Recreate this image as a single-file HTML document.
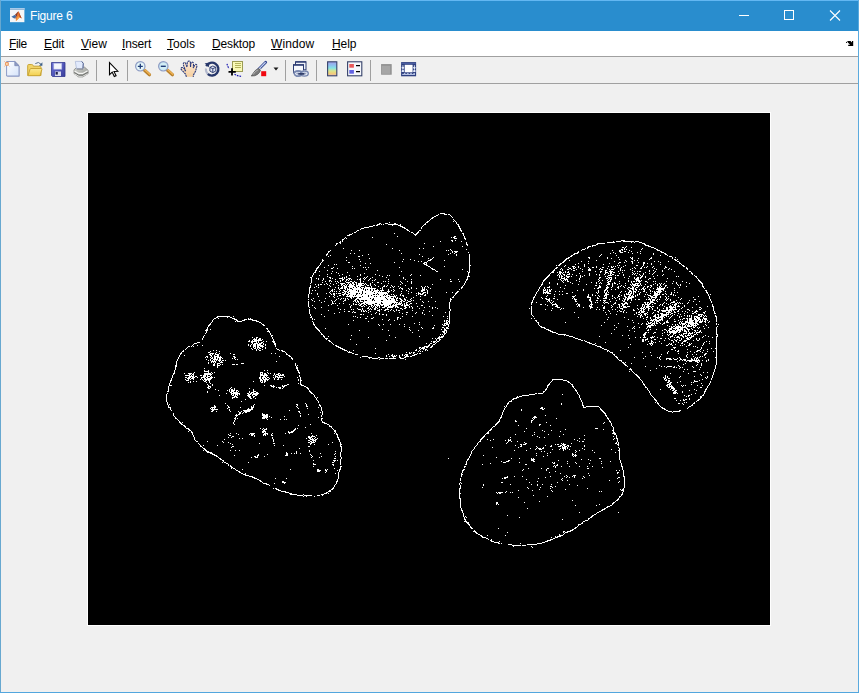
<!DOCTYPE html>
<html><head><meta charset="utf-8"><title>Figure 6</title>
<style>
html,body{margin:0;padding:0;background:#f0f0f0;overflow:hidden}
body{width:859px;height:693px;position:relative;font-family:"Liberation Sans",sans-serif;font-size:12px;color:#000}
#win{position:absolute;left:0;top:0;width:859px;height:693px;background:#f0f0f0;overflow:hidden}
#title{position:absolute;left:0;top:0;width:859px;height:31px;background:#298dce;border-top:1px solid #63b7f2;box-sizing:border-box}
#title .cap{position:absolute;left:30px;top:8px;color:#fff;font-size:12px;line-height:15px;white-space:nowrap;letter-spacing:-0.2px}
#menu{position:absolute;left:1px;top:31px;width:857px;height:25px;background:#fff}
#menu span{position:absolute;top:6px;line-height:15px;white-space:nowrap}
#menu span u{text-decoration:underline;text-underline-offset:1px}
#tbline1{position:absolute;left:1px;top:56px;width:857px;height:1px;background:#a0a0a0}
#tool{position:absolute;left:1px;top:57px;width:857px;height:26px;background:#f0f0f0}
#tbline2{position:absolute;left:1px;top:83px;width:857px;height:1px;background:#a0a0a0}
.sep{position:absolute;top:60px;width:1px;height:21px;background:#a0a0a0}
#bl{position:absolute;left:0;top:0;width:1px;height:693px;background:#67a8d0}
#br{position:absolute;left:858px;top:0;width:1px;height:693px;background:#5aaade}
#bb{position:absolute;left:0;top:692px;width:859px;height:1px;background:#52a6de}
#axes{position:absolute;left:87px;top:112px;width:684px;height:514px;background:#fff}
#axes svg{position:absolute;left:1px;top:1px}
svg.ic{position:absolute;overflow:visible}
</style></head><body><div id="win">
<div id="title"><span class="cap">Figure 6</span>
<svg class="ic" style="left:9.800px;top:6.800px" width="14.400" height="14.200" viewBox="0 0 14.400 14.200"><rect x="0" y="0" width="14.400" height="14.200" fill="#f5f6f7"/><rect x="0" y="0" width="14.400" height="1.700" fill="#a9cbea"/><rect x="0" y="1.500" width="14.400" height=".5" fill="#6f9cc4"/><path d="M1.400 8.700L5 6.700 6.600 8.600 4.300 10.400z" fill="#3f6ea8"/><path d="M5 6.700C6.500 5.500 7.500 3.800 8.300 3.200L7.700 7 6.300 10.200 4.300 10.400 6.600 8.600z" fill="#8c3a22"/><path d="M8.300 3.200C9.300 4.200 10.500 8.500 12.200 10.800 11 10 10 9.300 9.200 9.800 8.300 10.600 7.300 12.200 5.900 12.800 5.600 11.800 6.200 9.500 7.300 7.200z" fill="#e76f28"/><path d="M8.300 3.200C9.300 4.200 10.500 8.500 12.200 10.800 11.200 10.100 10.500 9.600 9.900 9.600 9.700 7.500 9.200 5 8.300 3.200z" fill="#a8401e"/><path d="M5.900 12.800C7.300 12.200 8.300 10.600 9.200 9.800L8.300 7.500 7 9.800z" fill="#f5a343"/></svg>
<svg class="ic" style="left:735px;top:9px" width="110" height="12" viewBox="0 0 110 12" fill="none" stroke="#fff" stroke-width="1"><path d="M4 5.5h10"/><rect x="49.5" y="0.5" width="9" height="9"/><path d="M95 0.5l10 10M105 0.5l-10 10" stroke-width="1.1"/></svg>
</div>
<div id="menu">
<span style="left:8px;letter-spacing:-0.35px"><u>F</u>ile</span>
<span style="left:43px;letter-spacing:-0.1px"><u>E</u>dit</span>
<span style="left:80px"><u>V</u>iew</span>
<span style="left:121px;letter-spacing:-0.15px"><u>I</u>nsert</span>
<span style="left:166px"><u>T</u>ools</span>
<span style="left:211px;letter-spacing:-0.15px"><u>D</u>esktop</span>
<span style="left:270px;letter-spacing:0.1px"><u>W</u>indow</span>
<span style="left:331px;letter-spacing:-0.1px"><u>H</u>elp</span>
<svg class="ic" style="left:844px;top:9px" width="9" height="7" viewBox="0 0 9 7"><path d="M2.200 1h3.300l1.500 1.400v-1.400h1.200v5h-5v-1.200h2l-1.600-1.600-.8-.6z" fill="#000"/><rect x="1" y="1.900" width="1" height="1" fill="#000"/></svg>
</div>
<div id="tbline1"></div><div id="tool"></div><div id="tbline2"></div>
<div class="sep" style="left:96px"></div><div class="sep" style="left:127px"></div><div class="sep" style="left:285px"></div><div class="sep" style="left:316px"></div><div class="sep" style="left:370px"></div>
<svg class="ic" style="left:4px;top:61px" width="17" height="17" viewBox="0 0 17 17"><defs><linearGradient id="gd" x1="0" y1="0" x2="1" y2="1"><stop offset="0" stop-color="#fff"/><stop offset="1" stop-color="#d5e3fa"/></linearGradient></defs><path d="M3.300 1.300h8.200l4.200 4.200v10.300h-12.400z" fill="#6f7fb4" opacity=".6"/><path d="M2.600 0.500h8.200l4.200 4.200v10.300h-12.400z" fill="url(#gd)" stroke="#8b9ac6" stroke-width="1"/><path d="M10.800 0.500v4.200h4.200z" fill="#8f9cc4" stroke="#7c8ab5" stroke-width=".8"/><circle cx="2.900" cy="2.900" r="2.100" fill="#ec9a62"/><circle cx="2.900" cy="2.900" r="1" fill="#ffe2b8"/><path d="M0.400 0.400l.9 .9M5.400 0.400l-.9 .9M0.400 5.400l.9-.9M5.400 5.400l-.9-.9" stroke="#e8905a" stroke-width=".7"/></svg>
<svg class="ic" style="left:27px;top:61px" width="16" height="16" viewBox="0 0 16 16"><defs><linearGradient id="gf" x1="0" y1="0" x2="0" y2="1"><stop offset="0" stop-color="#fbe991"/><stop offset="1" stop-color="#f3cf4d"/></linearGradient></defs><path d="M0.7 14.5v-10q0-1 1-1h3q1 0 1.3 .8l.4 .9h6.600q1 0 1 1v8.300z" fill="#f1d367" stroke="#c9a537" stroke-width="1"/><path d="M1 14.700l2-6.500q.2-.7 1-.7h10.300q.9 0 .6 .9l-1.900 6.300z" fill="url(#gf)" stroke="#c9a537" stroke-width="1"/><path d="M8.300 2.600q3.200-2.600 6 .8" fill="none" stroke="#58718f" stroke-width="1"/><path d="M15.400 1.300v3.400h-3.400z" fill="#3d5f86"/></svg>
<svg class="ic" style="left:50px;top:61px" width="16" height="16" viewBox="0 0 16 16"><defs><linearGradient id="gs" x1="0" y1="0" x2="1" y2="1"><stop offset="0" stop-color="#6a70d8"/><stop offset="1" stop-color="#3b3f9c"/></linearGradient></defs><path d="M1.500 1.500h13.500v14h-12.500l-1-1z" fill="url(#gs)" stroke="#34388e" stroke-width=".8"/><rect x="3.800" y="2.200" width="8" height="6" fill="#f3f5fc" stroke="#a9b0e2" stroke-width=".6"/><rect x="5" y="10.500" width="6" height="4.500" fill="#d9dcf0"/><rect x="5.600" y="11" width="2.200" height="2.600" fill="#1d1f4a"/></svg>
<svg class="ic" style="left:73px;top:61px" width="16" height="16" viewBox="0 0 16 16"><defs><linearGradient id="gp" x1="0" y1="0" x2="1" y2="1"><stop offset="0" stop-color="#d6d8d4"/><stop offset="1" stop-color="#8e908c"/></linearGradient></defs><path d="M1 8.800l3-2.600h7.600l3.500 3.100v3.300l-5.300 3.300h-4.200l-4.600-3.300z" fill="url(#gp)" stroke="#858783" stroke-width=".8"/><path d="M1.500 9.900l4.400 2.500h3.800l4.900-2.700" fill="none" stroke="#f6f6f4" stroke-width="1.100"/><path d="M1.400 11.600l4.500 2.700h3.800l5-2.800" fill="none" stroke="#5f615d" stroke-width=".9"/><path d="M1.500 12.900l4.400 2.400h3.700l4.900-2.600" fill="none" stroke="#eeeeec" stroke-width=".8"/><path d="M2.300 0.400h6.400l1.600 2-.4 5.400h-6.400z" fill="#e2eafc" stroke="#a6b4d6" stroke-width=".7"/><path d="M8.700 0.400l1.600 2-.4 5" fill="none" stroke="#52618e" stroke-width="1"/><path d="M3.800 8h6.200" stroke="#6a6c78" stroke-width=".8"/></svg>
<svg class="ic" style="left:104px;top:61px" width="16" height="16" viewBox="0 0 16 16"><path d="M5.500 1.700v12l2.700-2.600 2.100 4.500 1.800-.8-2.100-4.400 3.800-.2z" fill="#fff" stroke="#000" stroke-width="1.100" stroke-linejoin="miter"/></svg>
<svg class="ic" style="left:134px;top:61px" width="17" height="16" viewBox="0 0 17 16"><path d="M10.500 9.300l5 4.400" stroke="#b9812c" stroke-width="3.200" stroke-linecap="round"/><path d="M10.800 8.800l5 4.400" stroke="#efb355" stroke-width="1.500" stroke-linecap="round"/><circle cx="6.300" cy="5.300" r="4.700" fill="#d8f0f6" stroke="#8f9cc4" stroke-width="1.200"/><circle cx="6.300" cy="5.300" r="3.400" fill="#e9f8fb"/><path d="M3.800 5.300h5M6.300 2.800v5" stroke="#1f3c78" stroke-width="1.300"/></svg>
<svg class="ic" style="left:157px;top:61px" width="17" height="16" viewBox="0 0 17 16"><path d="M10.500 9.300l5 4.400" stroke="#b9812c" stroke-width="3.200" stroke-linecap="round"/><path d="M10.800 8.800l5 4.400" stroke="#efb355" stroke-width="1.500" stroke-linecap="round"/><circle cx="6.300" cy="5.300" r="4.700" fill="#c6e6f0" stroke="#8f9cc4" stroke-width="1.200"/><circle cx="6.300" cy="5.300" r="3.400" fill="#d4eff6"/><path d="M3.800 5.300h5" stroke="#1f3c78" stroke-width="1.400"/></svg>
<svg class="ic" style="left:180px;top:60px" width="18" height="17" viewBox="0 0 18 17"><defs><linearGradient id="gh" x1="0" y1="0" x2="0" y2="1"><stop offset="0" stop-color="#fdeada"/><stop offset="1" stop-color="#f6cf9e"/></linearGradient></defs><path d="M6.400 16.800L5.500 14 1.200 9.500Q.6 8.300 1.800 7.500 2.800 7.200 3.800 8.300L5 9.500 3.300 4.500Q3.100 2.800 4.300 2.500 5.300 2.400 5.800 3.800L7 7.200 7.300 2.500Q7.600 1 9 1 10.300 1.100 10.400 2.600L10.500 7 11 3.300Q11.500 1.900 12.600 2.200 13.600 2.600 13.500 4L13.300 8 14.600 5.200Q15.400 4 16.300 4.500 17.200 5.200 16.800 6.600L15.600 11 13.500 15 13.200 16.800z" fill="url(#gh)" stroke="none"/><path d="M6.400 16.800L5.500 14 1.200 9.500Q.6 8.300 1.800 7.500 2.800 7.200 3.800 8.300L5 9.500 3.300 4.500Q3.100 2.800 4.300 2.500 5.300 2.400 5.800 3.800L7 7.200 7.300 2.500Q7.600 1 9 1 10.300 1.100 10.400 2.600L10.500 7 11 3.300Q11.500 1.900 12.600 2.200 13.600 2.600 13.500 4L13.300 8 14.600 5.200Q15.400 4 16.300 4.500 17.200 5.200 16.800 6.600L15.600 11 13.500 15 13.200 16.800" fill="none" stroke="#2b3a7c" stroke-width="1.100" stroke-dasharray="2 .6"/><path d="M4.800 9.500l.8 1.800" stroke="#2b3a7c" stroke-width="1.300"/></svg>
<svg class="ic" style="left:203px;top:60px" width="18" height="18" viewBox="0 0 18 18"><path d="M4.600 13.800a6.400 6.400 0 1 0 -1.300-7.600" fill="none" stroke="#26366a" stroke-width="2.300"/><path d="M4.800 14a6.400 6.400 0 0 1 -1.800-5.500" fill="none" stroke="#b4bace" stroke-width="2.100"/><path d="M1.600 3.400l4.600-1-.2 4.900z" fill="#26366a"/><path d="M6.900 7.400l2.900-1.400 3 1.300v3.700l-3 1.600-2.900-1.500z" fill="#dfe4f6" stroke="#26366a" stroke-width=".9"/><path d="M6.900 7.400l2.900 1.300 3-1.400M9.800 8.700v3.900" fill="none" stroke="#26366a" stroke-width=".9"/></svg>
<svg class="ic" style="left:226px;top:61px" width="17" height="16" viewBox="0 0 17 16"><rect x="6.500" y="0.500" width="10" height="10" fill="#f9f9b6" stroke="#9b9b55" stroke-width="1"/><path d="M8.500 2.500h6M8.500 4.500h6M8.500 6.500h6" stroke="#b4b45c" stroke-width="1" shape-rendering="crispEdges"/><path d="M1 2.800l.6 2.200 1.400 2.600M8.500 13.300l3 1.400 4.500 .8" fill="none" stroke="#1a1ab0" stroke-width="1.200" stroke-dasharray="1.700 .9"/><path d="M2.500 10.800h7.300M6 7.300v7.300" stroke="#000" stroke-width="1.800"/></svg>
<svg class="ic" style="left:250px;top:61px" width="17" height="16" viewBox="0 0 17 16"><path d="M15.700 1.300l-7.700 7.800" stroke="#31458f" stroke-width="2.800" stroke-linecap="round"/><path d="M15.300 1.500l-6.800 6.900" stroke="#c7d3f2" stroke-width="1.100" stroke-linecap="round"/><path d="M9.200 7.200l1.500 1.500" stroke="#f2f2f2" stroke-width="1.200"/><path d="M8.800 7.600q-3.800 1-6 5.200-1.300 2-1.600 2.200 4 .3 6.500-1.700 2.500-2 2.700-4.300z" fill="#7b7b7b" stroke="#4a4a4a" stroke-width=".7"/><path d="M3 13.600q2.200-3.600 5.200-4.900" stroke="#b5b5b5" stroke-width="1" fill="none"/><rect x="11.200" y="10.200" width="5" height="5" fill="#f00810"/></svg>
<svg class="ic" style="left:273px;top:67px" width="6" height="4" viewBox="0 0 6 4"><path d="M0.500 0.500h5l-2.500 3z" fill="#1a1a1a"/></svg>
<svg class="ic" style="left:292px;top:61px" width="18" height="16" viewBox="0 0 18 16"><rect x="3.500" y="0.800" width="10.500" height="8" fill="#eef1f8" stroke="#2b3b72" stroke-width="1"/><rect x="3.500" y="0.300" width="10.500" height="1.300" fill="#2b3b72"/><rect x="1.500" y="3.800" width="10" height="8" fill="#f6f8fc" stroke="#2b3b72" stroke-width="1"/><rect x="1" y="3.300" width="11" height="1.400" fill="#2b3b72"/><rect x="1.800" y="9.500" width="11" height="3" fill="#eef1f8"/><ellipse cx="6.200" cy="12.600" rx="3.900" ry="2.600" fill="#e3e8f4" stroke="#7686ae" stroke-width="1.300"/><ellipse cx="12.400" cy="12.600" rx="3.900" ry="2.600" fill="#e3e8f4" stroke="#7686ae" stroke-width="1.300"/><ellipse cx="6.200" cy="12.600" rx="3.900" ry="2.600" fill="none" stroke="#7686ae" stroke-width="1.300"/><ellipse cx="6.200" cy="12.600" rx="2" ry="1" fill="#9aa6c4"/><ellipse cx="12.400" cy="12.600" rx="2" ry="1" fill="#9aa6c4"/><path d="M6.300 12.900h6" stroke="#1e2c5a" stroke-width="1.500"/></svg>
<svg class="ic" style="left:327px;top:61px" width="11" height="16" viewBox="0 0 11 16"><defs><linearGradient id="gc" x1="0" y1="0" x2="0" y2="1"><stop offset="0" stop-color="#a29ee8"/><stop offset=".25" stop-color="#8fc0f0"/><stop offset=".45" stop-color="#86e4e4"/><stop offset=".65" stop-color="#d8e690"/><stop offset=".82" stop-color="#f2d078"/><stop offset="1" stop-color="#e8b8b0"/></linearGradient></defs><rect x="0.600" y="0.800" width="9.200" height="14" fill="url(#gc)" stroke="#36426a" stroke-width="1.100"/></svg>
<svg class="ic" style="left:347px;top:61px" width="16" height="16" viewBox="0 0 16 16"><rect x="0.600" y="0.800" width="14.200" height="14" fill="#f6f8fc" stroke="#36426a" stroke-width="1.100"/><rect x="2.300" y="3" width="4.600" height="3.700" fill="#e85a5a"/><rect x="2.300" y="9" width="4.600" height="3.700" fill="#6262e2"/><path d="M9 4.600h4M9 10.700h4" stroke="#000" stroke-width="1.200"/></svg>
<svg class="ic" style="left:381px;top:64px" width="11" height="11" viewBox="0 0 11 11"><rect x="0.100" y="0.100" width="10.600" height="10.600" fill="#8e8e8e"/><rect x="0.700" y="1.700" width="8.600" height="8.200" fill="#a6a6a6"/><rect x="0.700" y="0.300" width="9" height="1.200" fill="#989898"/></svg>
<svg class="ic" style="left:401px;top:62px" width="16" height="15" viewBox="0 0 16 15"><rect x="0.100" y="0.100" width="15" height="14.200" fill="#2e4080"/><rect x="3.700" y="2.800" width="7.900" height="7.500" fill="#fff"/><path d="M1.100 3.200q1.400 .8 0 1.700t0 1.700 0 1.700 0 1.700h1.600q1.200-.9 0-1.700t0-1.700 0-1.700 0-1.700z" fill="#e6ecfa"/><path d="M12.600 3.200q1.400 .8 0 1.700t0 1.700 0 1.700 0 1.700h1.600q1.200-.9 0-1.700t0-1.700 0-1.700 0-1.700z" fill="#e6ecfa"/><path d="M1.200 11.400q.8 1.400 1.600 0t1.600 0 1.600 0 1.600 0 1.600 0 1.600 0 1.600 0 1.600 0v1.500h-12.800z" fill="#b4c0e2"/><path d="M0.500 1.400h14.200" stroke="#5c70b4" stroke-width=".7"/></svg>

<div id="bl"></div><div id="br"></div><div id="bb"></div>
<div id="axes"><svg width="682" height="512" viewBox="0 0 682 512" shape-rendering="crispEdges"><rect width="682" height="512" fill="#000"/>
<path d="M352 100h5M350 101h1M356 101h3M360 101h2M348 102h2M362 102h1M346 103h2M363 103h1M344 104h2M364 104h1M343 105h2M342 106h1M365 106h1M341 107h1M366 107h1M339 108h2M365 108h1M367 108h1M301 109h1M338 109h2M368 109h1M291 110h2M297 110h3M306 110h2M337 110h1M368 110h1M289 111h3M293 111h1M295 111h1M300 111h10M312 111h1M336 111h2M369 111h2M285 112h2M288 112h2M304 112h1M310 112h3M335 112h1M370 112h1M281 113h4M312 113h3M334 113h1M370 113h2M276 114h5M314 114h3M333 114h1M371 114h1M273 115h3M316 115h2M333 115h1M371 115h2M272 116h1M318 116h2M372 116h1M269 117h2M319 117h2M331 117h2M372 117h2M268 118h1M321 118h1M330 118h1M373 118h1M266 119h2M323 119h2M329 119h2M264 120h1M306 120h1M325 120h1M328 120h2M374 120h2M261 121h3M326 121h3M375 121h1M259 122h3M327 122h1M375 122h1M309 123h1M366 123h2M376 123h1M257 124h1M284 124h1M363 124h1M365 124h2M376 124h1M256 125h1M258 125h1M366 125h3M376 125h2M254 126h2M377 126h1M254 127h1M363 127h2M367 127h1M533 127h4M252 128h1M254 128h1M352 128h1M364 128h1M373 128h1M525 128h1M528 128h5M535 128h11M547 128h4M251 129h2M378 129h1M519 129h8M543 129h1M546 129h1M551 129h3M248 130h2M252 130h1M336 130h1M378 130h1M509 130h8M554 130h3M248 131h1M298 131h1M378 131h2M508 131h2M556 131h2M247 132h1M379 132h1M504 132h4M557 132h4M345 133h1M374 133h1M500 133h3M504 133h1M538 133h1M560 133h3M499 134h2M534 134h2M537 134h1M543 134h1M563 134h3M255 135h1M304 135h1M331 135h1M335 135h1M497 135h1M499 135h1M536 135h1M554 135h1M566 135h2M362 136h1M378 136h1M494 136h3M533 136h2M536 136h1M538 136h1M553 136h1M568 136h2M242 137h1M263 137h1M271 137h1M311 137h1M358 137h1M360 137h1M363 137h1M493 137h1M524 137h1M531 137h2M534 137h1M541 137h1M569 137h3M240 138h2M364 138h1M366 138h4M490 138h1M531 138h2M536 138h2M543 138h1M552 138h1M572 138h2M240 139h1M364 139h1M367 139h2M380 139h1M489 139h2M525 139h1M532 139h3M540 139h1M549 139h1M573 139h3M239 140h1M262 140h1M266 140h1M313 140h1M362 140h1M366 140h1M486 140h4M522 140h1M527 140h1M544 140h1M552 140h1M565 140h1M576 140h2M238 141h2M280 141h1M331 141h1M360 141h1M368 141h1M381 141h1M485 141h2M513 141h1M565 141h1M577 141h2M238 142h1M242 142h1M274 142h1M368 142h1M381 142h1M483 142h2M512 142h1M528 142h1M572 142h1M579 142h1M240 143h1M270 143h2M334 143h1M381 143h1M482 143h2M511 143h1M581 143h3M258 144h1M345 144h1M381 144h1M480 144h2M500 144h2M519 144h1M530 144h1M542 144h1M544 144h1M563 144h1M584 144h1M587 144h1M281 145h1M340 145h1M344 145h1M381 145h1M478 145h3M501 145h1M519 145h1M523 145h1M543 145h2M550 145h1M562 145h2M584 145h1M234 146h1M271 146h1M315 146h1M322 146h1M342 146h2M381 146h1M477 146h2M531 146h1M544 146h1M561 146h1M586 146h2M589 146h1M234 147h2M258 147h1M326 147h1M340 147h3M356 147h1M381 147h1M476 147h2M481 147h1M508 147h1M537 147h1M546 147h1M549 147h1M587 147h2M234 148h1M272 148h1M314 148h1M330 148h1M333 148h1M339 148h1M381 148h1M475 148h2M493 148h1M500 148h1M526 148h1M538 148h1M543 148h2M566 148h1M570 148h1M580 148h1M589 148h2M233 149h1M260 149h2M306 149h1M336 149h3M381 149h1M474 149h2M531 149h2M536 149h1M544 149h1M550 149h1M555 149h2M572 149h1M591 149h1M232 150h1M277 150h1M282 150h1M335 150h2M338 150h1M381 150h1M472 150h2M490 150h1M500 150h1M521 150h1M530 150h1M544 150h1M555 150h2M559 150h1M563 150h1M591 150h2M232 151h1M246 151h1M248 151h1M336 151h3M381 151h1M471 151h2M487 151h1M496 151h1M515 151h1M555 151h1M563 151h1M572 151h1M593 151h1M231 152h1M240 152h1M272 152h1M338 152h2M381 152h2M468 152h1M470 152h2M477 152h1M496 152h1M529 152h1M531 152h1M537 152h1M548 152h2M555 152h1M594 152h2M230 153h1M264 153h1M340 153h2M356 153h1M381 153h1M476 153h1M484 153h3M490 153h1M496 153h1M508 153h1M520 153h1M523 153h1M525 153h1M527 153h1M535 153h1M554 153h1M559 153h1M565 153h1M577 153h1M595 153h2M229 154h2M236 154h1M245 154h1M275 154h1M277 154h1M280 154h1M311 154h1M342 154h1M381 154h1M468 154h2M480 154h1M485 154h1M487 154h1M490 154h1M500 154h1M504 154h2M508 154h1M514 154h2M523 154h2M530 154h1M533 154h1M546 154h1M553 154h1M556 154h1M558 154h1M564 154h1M577 154h2M598 154h1M228 155h2M243 155h2M249 155h1M264 155h1M266 155h1M343 155h2M381 155h1M467 155h2M473 155h1M481 155h2M485 155h2M492 155h1M501 155h1M512 155h1M519 155h1M526 155h1M532 155h1M544 155h1M547 155h1M552 155h2M566 155h1M576 155h1M581 155h1M598 155h2M228 156h1M278 156h1M344 156h3M374 156h1M381 156h1M466 156h1M472 156h1M474 156h1M479 156h2M483 156h1M488 156h1M494 156h1M500 156h3M511 156h1M513 156h2M521 156h1M523 156h3M532 156h1M542 156h1M568 156h1M580 156h1M583 156h1M599 156h1M227 157h2M239 157h1M289 157h1M347 157h1M381 157h1M465 157h2M474 157h1M485 157h2M500 157h3M517 157h2M522 157h1M532 157h1M534 157h1M536 157h1M544 157h1M561 157h1M565 157h1M574 157h1M227 158h1M231 158h1M244 158h1M313 158h1M348 158h2M379 158h1M381 158h1M464 158h2M471 158h2M477 158h1M480 158h1M494 158h1M507 158h1M512 158h2M517 158h1M521 158h4M530 158h1M546 158h1M549 158h1M551 158h2M561 158h1M567 158h1M574 158h1M586 158h1M601 158h2M226 159h2M248 159h1M259 159h1M380 159h2M463 159h3M469 159h1M471 159h3M475 159h1M477 159h1M479 159h2M512 159h1M517 159h3M522 159h2M525 159h2M534 159h1M544 159h1M557 159h1M566 159h1M603 159h1M225 160h1M243 160h1M250 160h1M276 160h1M380 160h1M462 160h1M471 160h2M474 160h1M481 160h1M491 160h1M501 160h1M517 160h1M520 160h1M522 160h2M531 160h1M545 160h1M547 160h1M549 160h1M555 160h1M561 160h1M565 160h1M603 160h2M225 161h1M239 161h1M254 161h1M272 161h1M287 161h1M323 161h1M380 161h1M461 161h1M470 161h1M472 161h1M475 161h2M479 161h3M484 161h1M501 161h1M508 161h1M511 161h1M516 161h1M522 161h1M524 161h2M535 161h1M544 161h1M546 161h1M551 161h1M555 161h1M564 161h1M575 161h1M604 161h1M224 162h1M231 162h1M251 162h1M261 162h1M272 162h1M291 162h1M299 162h1M301 162h1M311 162h1M322 162h1M332 162h1M380 162h1M460 162h2M469 162h1M471 162h1M473 162h1M476 162h1M478 162h1M488 162h1M492 162h1M496 162h1M501 162h1M511 162h1M520 162h4M527 162h1M529 162h2M535 162h1M548 162h1M552 162h1M554 162h1M569 162h1M574 162h1M606 162h1M224 163h1M239 163h1M258 163h1M269 163h1M279 163h1M294 163h1M379 163h3M459 163h2M471 163h1M473 163h2M478 163h4M483 163h1M492 163h1M494 163h1M517 163h1M519 163h1M541 163h1M553 163h2M557 163h1M565 163h1M588 163h1M590 163h1M607 163h2M222 164h2M241 164h2M254 164h1M256 164h1M258 164h1M276 164h1M278 164h1M284 164h1M298 164h1M315 164h1M379 164h1M458 164h2M471 164h1M473 164h1M476 164h1M479 164h2M492 164h1M511 164h2M520 164h4M527 164h1M536 164h1M546 164h1M549 164h2M552 164h2M557 164h1M608 164h1M223 165h1M228 165h1M230 165h1M235 165h1M242 165h1M244 165h1M251 165h4M256 165h1M260 165h3M272 165h1M275 165h1M277 165h1M282 165h1M315 165h1M379 165h1M457 165h2M473 165h4M478 165h1M491 165h1M511 165h1M518 165h2M521 165h1M523 165h1M527 165h1M540 165h1M546 165h1M548 165h3M552 165h1M561 165h2M566 165h1M579 165h1M609 165h1M223 166h1M230 166h1M235 166h1M247 166h1M254 166h2M258 166h2M261 166h1M263 166h1M269 166h1M271 166h2M276 166h1M281 166h1M287 166h1M300 166h1M317 166h1M323 166h1M352 166h1M362 166h1M370 166h1M378 166h2M456 166h2M470 166h1M472 166h1M476 166h4M491 166h1M510 166h1M520 166h1M522 166h2M547 166h4M560 166h1M610 166h1M223 167h1M234 167h1M241 167h2M252 167h1M254 167h1M258 167h1M260 167h1M272 167h1M280 167h1M284 167h1M286 167h1M378 167h1M455 167h2M473 167h1M475 167h1M477 167h1M479 167h1M488 167h1M511 167h1M514 167h1M519 167h1M522 167h1M540 167h1M548 167h4M553 167h1M610 167h2M223 168h1M237 168h1M241 168h1M243 168h1M247 168h1M249 168h1M252 168h1M257 168h1M262 168h2M266 168h1M272 168h1M275 168h1M295 168h1M297 168h1M300 168h1M312 168h1M319 168h1M323 168h1M362 168h2M371 168h1M377 168h1M455 168h1M474 168h1M479 168h2M491 168h1M510 168h1M520 168h3M531 168h1M540 168h1M543 168h1M545 168h2M548 168h1M550 168h3M557 168h2M565 168h1M567 168h1M578 168h1M585 168h1M594 168h1M611 168h2M223 169h1M234 169h1M250 169h1M258 169h4M264 169h2M267 169h2M272 169h1M284 169h1M289 169h2M313 169h1M323 169h1M377 169h1M454 169h1M461 169h1M475 169h1M482 169h1M503 169h1M508 169h1M512 169h1M519 169h2M526 169h1M543 169h1M551 169h1M559 169h1M588 169h1M598 169h1M612 169h2M222 170h1M238 170h1M242 170h1M248 170h1M252 170h5M260 170h1M262 170h1M264 170h2M268 170h1M270 170h6M277 170h1M282 170h1M293 170h1M300 170h1M314 170h1M323 170h1M376 170h1M454 170h1M461 170h1M469 170h1M484 170h1M508 170h1M511 170h1M513 170h1M520 170h2M524 170h1M526 170h2M531 170h1M537 170h1M544 170h1M547 170h4M552 170h1M567 170h1M571 170h1M573 170h1M576 170h1M584 170h1M588 170h1M601 170h1M613 170h2M227 171h1M230 171h1M232 171h2M236 171h1M239 171h1M245 171h1M253 171h2M257 171h1M259 171h1M261 171h3M265 171h2M268 171h1M270 171h4M276 171h1M278 171h1M282 171h1M286 171h1M312 171h1M344 171h1M376 171h1M453 171h2M469 171h1M490 171h1M498 171h1M519 171h3M524 171h1M529 171h1M542 171h1M544 171h4M549 171h1M552 171h1M557 171h1M565 171h1M569 171h1M572 171h1M575 171h1M589 171h1M592 171h1M614 171h1M222 172h1M230 172h1M241 172h1M250 172h1M253 172h1M255 172h2M258 172h1M261 172h5M268 172h8M279 172h2M282 172h1M287 172h1M296 172h1M299 172h1M303 172h1M317 172h1M375 172h1M453 172h1M477 172h1M507 172h2M511 172h1M518 172h1M524 172h1M533 172h1M537 172h1M543 172h1M545 172h7M553 172h1M562 172h2M569 172h1M572 172h1M577 172h2M590 172h1M592 172h1M614 172h1M222 173h1M228 173h1M242 173h1M254 173h1M256 173h3M260 173h7M268 173h2M271 173h2M277 173h1M283 173h1M290 173h1M295 173h2M298 173h1M304 173h1M306 173h1M310 173h1M333 173h1M337 173h1M339 173h1M374 173h1M452 173h1M461 173h1M511 173h2M519 173h1M524 173h1M530 173h1M532 173h1M535 173h1M544 173h1M546 173h1M550 173h1M556 173h1M559 173h2M563 173h1M571 173h1M573 173h1M577 173h1M598 173h1M614 173h2M221 174h2M226 174h1M230 174h1M247 174h1M250 174h1M253 174h2M256 174h3M261 174h4M266 174h2M269 174h3M273 174h3M277 174h5M283 174h1M294 174h1M302 174h1M305 174h1M312 174h1M323 174h1M334 174h1M336 174h1M340 174h1M373 174h2M451 174h1M456 174h1M459 174h3M472 174h1M510 174h3M518 174h3M523 174h1M529 174h2M536 174h1M540 174h2M544 174h2M548 174h2M555 174h1M559 174h1M562 174h1M569 174h1M571 174h2M576 174h1M579 174h1M591 174h1M615 174h1M221 175h1M240 175h1M250 175h1M252 175h3M256 175h2M259 175h1M261 175h1M264 175h9M274 175h1M276 175h12M292 175h1M294 175h1M311 175h1M313 175h2M320 175h1M323 175h1M328 175h1M334 175h1M336 175h1M342 175h1M373 175h1M451 175h1M456 175h1M476 175h1M506 175h1M509 175h2M518 175h2M530 175h1M539 175h1M542 175h4M547 175h1M554 175h2M557 175h1M565 175h1M569 175h8M586 175h1M616 175h1M221 176h1M244 176h1M246 176h1M251 176h1M257 176h1M259 176h5M265 176h10M276 176h1M278 176h1M280 176h2M283 176h2M286 176h1M289 176h1M294 176h1M300 176h1M305 176h1M314 176h1M321 176h1M334 176h3M338 176h1M371 176h1M450 176h1M455 176h1M457 176h1M459 176h1M461 176h1M463 176h1M495 176h1M517 176h2M523 176h1M527 176h1M540 176h1M544 176h2M547 176h2M551 176h1M553 176h1M555 176h2M561 176h1M568 176h8M221 177h1M224 177h1M227 177h1M243 177h2M252 177h1M255 177h2M259 177h1M261 177h7M269 177h1M271 177h6M278 177h4M283 177h2M286 177h5M292 177h4M300 177h1M303 177h1M306 177h1M318 177h1M333 177h4M339 177h1M450 177h1M455 177h3M459 177h1M461 177h2M489 177h1M495 177h1M510 177h1M516 177h2M519 177h1M541 177h2M545 177h1M548 177h1M556 177h1M562 177h1M570 177h3M575 177h1M586 177h1M617 177h2M221 178h1M242 178h1M244 178h1M246 178h1M248 178h1M251 178h1M256 178h3M260 178h10M271 178h3M275 178h9M285 178h5M291 178h1M293 178h1M299 178h3M305 178h1M313 178h1M320 178h1M333 178h2M339 178h1M369 178h2M449 178h1M455 178h1M458 178h2M461 178h2M467 178h1M471 178h1M474 178h1M510 178h1M516 178h1M519 178h1M533 178h1M537 178h1M541 178h3M545 178h3M550 178h1M555 178h2M562 178h1M564 178h1M566 178h1M568 178h6M577 178h1M618 178h1M221 179h1M241 179h1M254 179h2M257 179h1M259 179h2M262 179h12M275 179h11M287 179h12M300 179h1M323 179h1M330 179h1M335 179h3M339 179h1M358 179h1M364 179h1M368 179h2M448 179h1M455 179h6M484 179h1M508 179h1M510 179h1M516 179h1M518 179h1M520 179h1M532 179h1M540 179h2M543 179h1M545 179h1M547 179h1M552 179h1M558 179h1M566 179h2M569 179h4M583 179h1M586 179h1M589 179h1M618 179h2M221 180h1M223 180h1M229 180h1M238 180h1M242 180h1M245 180h2M248 180h1M250 180h3M256 180h2M260 180h8M270 180h1M272 180h2M275 180h2M278 180h11M290 180h10M313 180h1M320 180h1M328 180h1M330 180h3M334 180h2M339 180h1M367 180h2M448 180h1M455 180h1M457 180h1M459 180h4M478 180h2M509 180h1M517 180h2M538 180h1M540 180h1M542 180h2M545 180h1M551 180h1M562 180h1M566 180h4M571 180h1M577 180h1M583 180h1M619 180h1M220 181h1M229 181h1M243 181h1M245 181h2M254 181h3M258 181h3M262 181h6M269 181h4M274 181h11M287 181h1M289 181h1M291 181h5M297 181h1M299 181h1M303 181h1M305 181h1M312 181h1M330 181h1M332 181h3M337 181h1M367 181h1M447 181h1M466 181h1M471 181h1M474 181h1M500 181h1M504 181h1M517 181h4M531 181h1M536 181h1M538 181h5M545 181h1M549 181h1M551 181h1M557 181h1M559 181h1M566 181h6M574 181h2M578 181h1M582 181h2M585 181h1M620 181h1M622 181h1M220 182h1M246 182h1M251 182h2M255 182h1M259 182h1M261 182h4M266 182h1M268 182h12M281 182h2M284 182h11M296 182h1M298 182h4M306 182h1M308 182h1M312 182h1M314 182h2M328 182h1M336 182h2M366 182h1M447 182h1M459 182h1M487 182h1M500 182h1M504 182h1M507 182h1M510 182h1M516 182h3M524 182h1M530 182h1M533 182h1M536 182h1M541 182h2M544 182h1M547 182h1M549 182h1M560 182h3M565 182h5M585 182h1M587 182h1M620 182h1M220 183h1M230 183h1M241 183h1M245 183h1M249 183h1M258 183h16M275 183h5M281 183h5M287 183h1M289 183h3M293 183h7M301 183h7M315 183h1M332 183h1M365 183h1M446 183h1M458 183h1M466 183h1M484 183h3M499 183h2M511 183h1M516 183h1M518 183h1M524 183h1M530 183h2M536 183h2M540 183h2M543 183h3M547 183h1M556 183h1M562 183h3M567 183h2M572 183h1M577 183h1M580 183h1M610 183h1M621 183h1M220 184h1M246 184h1M262 184h2M265 184h1M269 184h2M273 184h24M298 184h5M305 184h1M307 184h1M309 184h1M318 184h1M325 184h1M343 184h1M364 184h2M445 184h2M453 184h1M485 184h1M499 184h4M509 184h1M517 184h2M526 184h1M529 184h1M537 184h2M540 184h6M560 184h1M563 184h6M572 184h1M578 184h1M590 184h1M605 184h1M621 184h1M225 185h1M237 185h1M250 185h1M253 185h1M255 185h1M257 185h1M259 185h1M263 185h1M268 185h14M283 185h2M286 185h12M299 185h7M308 185h2M311 185h2M316 185h1M323 185h1M362 185h1M445 185h1M454 185h1M457 185h2M461 185h1M465 185h2M484 185h1M486 185h1M502 185h1M509 185h2M515 185h4M524 185h1M527 185h1M531 185h1M535 185h1M537 185h1M539 185h5M561 185h1M563 185h1M567 185h1M578 185h1M580 185h1M593 185h1M621 185h1M220 186h1M223 186h1M248 186h1M252 186h1M257 186h1M260 186h1M267 186h2M271 186h13M286 186h13M300 186h2M303 186h4M308 186h1M312 186h2M316 186h2M322 186h1M332 186h1M362 186h2M445 186h1M458 186h4M469 186h1M486 186h3M501 186h2M521 186h1M531 186h1M536 186h2M539 186h2M543 186h1M547 186h1M550 186h2M558 186h1M560 186h3M564 186h3M569 186h1M571 186h1M577 186h1M579 186h1M582 186h1M592 186h1M606 186h2M622 186h1M224 187h1M231 187h1M243 187h1M247 187h1M256 187h2M266 187h2M269 187h1M272 187h1M276 187h1M279 187h5M285 187h1M287 187h6M295 187h12M308 187h2M313 187h2M317 187h1M319 187h1M323 187h1M325 187h1M362 187h1M444 187h1M460 187h2M463 187h1M487 187h1M501 187h2M508 187h2M512 187h1M515 187h3M528 187h1M534 187h1M536 187h1M539 187h1M543 187h1M562 187h1M564 187h3M568 187h1M578 187h1M582 187h1M588 187h1M601 187h1M622 187h1M220 188h1M226 188h1M236 188h1M244 188h1M246 188h1M255 188h1M265 188h1M267 188h1M269 188h2M272 188h3M276 188h32M312 188h2M315 188h2M320 188h3M334 188h1M340 188h1M347 188h1M362 188h1M444 188h1M459 188h1M461 188h1M465 188h1M487 188h2M502 188h2M516 188h1M522 188h1M535 188h2M562 188h3M569 188h1M585 188h2M605 188h1M611 188h1M623 188h1M220 189h1M233 189h1M244 189h1M268 189h1M270 189h1M275 189h18M294 189h16M311 189h1M313 189h1M318 189h2M335 189h1M361 189h1M443 189h2M448 189h1M462 189h1M464 189h1M503 189h1M507 189h1M509 189h1M515 189h1M517 189h3M527 189h1M537 189h2M542 189h1M556 189h2M559 189h2M562 189h4M576 189h1M583 189h4M589 189h1M591 189h1M600 189h1M623 189h1M220 190h1M244 190h2M247 190h1M251 190h1M255 190h1M265 190h1M271 190h1M273 190h4M278 190h9M289 190h4M295 190h9M306 190h1M308 190h1M310 190h4M316 190h1M318 190h1M322 190h2M328 190h1M361 190h1M443 190h1M463 190h1M467 190h1M489 190h1M503 190h1M516 190h1M520 190h1M526 190h2M533 190h2M536 190h4M557 190h1M559 190h1M561 190h2M566 190h2M575 190h1M578 190h1M582 190h1M587 190h2M590 190h1M592 190h1M594 190h1M599 190h1M220 191h1M243 191h1M261 191h1M265 191h1M267 191h2M270 191h1M272 191h2M276 191h2M280 191h4M286 191h5M292 191h11M305 191h1M307 191h6M314 191h1M316 191h1M318 191h2M321 191h1M361 191h1M443 191h1M452 191h2M457 191h1M464 191h5M488 191h1M490 191h2M502 191h3M525 191h1M530 191h2M534 191h3M539 191h1M554 191h2M557 191h5M564 191h1M572 191h1M574 191h1M580 191h1M584 191h1M586 191h3M608 191h1M624 191h1M220 192h1M224 192h1M240 192h1M249 192h1M263 192h1M271 192h2M275 192h1M278 192h1M283 192h2M286 192h1M288 192h4M293 192h2M296 192h5M302 192h1M304 192h5M313 192h2M316 192h5M333 192h2M361 192h1M459 192h1M464 192h1M468 192h2M490 192h2M501 192h1M503 192h1M514 192h1M523 192h1M531 192h1M534 192h2M549 192h1M554 192h1M556 192h1M559 192h2M571 192h1M574 192h1M582 192h1M586 192h2M590 192h1M596 192h1M624 192h1M220 193h1M262 193h1M273 193h2M276 193h1M281 193h1M283 193h1M285 193h1M287 193h1M289 193h1M291 193h1M296 193h3M300 193h6M307 193h3M316 193h2M321 193h1M323 193h1M329 193h1M341 193h1M361 193h1M443 193h1M467 193h3M489 193h1M491 193h1M501 193h3M516 193h1M524 193h1M531 193h1M533 193h1M535 193h3M539 193h3M554 193h1M556 193h1M558 193h5M564 193h2M576 193h1M581 193h3M585 193h1M587 193h1M589 193h3M596 193h1M619 193h1M624 193h2M221 194h1M226 194h1M233 194h1M262 194h1M280 194h1M284 194h1M287 194h2M291 194h1M294 194h3M299 194h6M307 194h1M309 194h2M317 194h2M321 194h1M324 194h1M336 194h1M344 194h1M347 194h1M361 194h1M443 194h1M469 194h3M495 194h1M502 194h3M509 194h1M515 194h2M523 194h1M529 194h1M531 194h1M535 194h4M553 194h1M555 194h2M558 194h3M563 194h1M569 194h1M578 194h2M581 194h7M594 194h1M604 194h1M611 194h2M625 194h1M227 195h1M250 195h1M269 195h1M274 195h1M279 195h2M282 195h1M286 195h2M289 195h1M299 195h1M312 195h2M316 195h2M324 195h1M331 195h1M344 195h1M349 195h1M361 195h1M441 195h1M443 195h1M464 195h1M473 195h1M475 195h1M502 195h1M515 195h2M532 195h3M549 195h1M552 195h4M557 195h1M560 195h2M564 195h1M569 195h1M575 195h1M578 195h2M582 195h3M587 195h1M593 195h1M613 195h1M625 195h1M221 196h1M252 196h1M256 196h1M263 196h1M265 196h1M270 196h3M274 196h1M281 196h1M283 196h1M286 196h2M291 196h1M293 196h1M297 196h4M303 196h1M308 196h1M314 196h1M362 196h1M443 196h1M457 196h1M472 196h1M508 196h1M511 196h1M524 196h1M527 196h1M534 196h1M545 196h1M550 196h1M553 196h1M555 196h2M560 196h1M564 196h1M571 196h1M578 196h2M581 196h8M591 196h1M599 196h2M611 196h2M625 196h1M221 197h1M240 197h1M273 197h1M275 197h1M277 197h1M280 197h1M289 197h3M296 197h2M302 197h1M305 197h1M308 197h1M310 197h2M324 197h1M335 197h1M362 197h1M443 197h1M463 197h1M515 197h1M520 197h1M531 197h1M536 197h1M545 197h2M552 197h2M555 197h1M560 197h1M566 197h2M571 197h1M573 197h11M585 197h1M590 197h1M601 197h1M608 197h1M625 197h1M221 198h1M256 198h1M260 198h2M265 198h1M273 198h1M275 198h2M278 198h1M282 198h1M291 198h1M300 198h1M306 198h1M341 198h1M361 198h1M443 198h1M521 198h1M529 198h1M532 198h2M535 198h1M551 198h1M553 198h4M569 198h2M574 198h4M580 198h2M583 198h1M586 198h1M589 198h2M594 198h1M597 198h1M604 198h1M607 198h3M617 198h1M626 198h1M221 199h1M251 199h1M264 199h1M266 199h2M280 199h1M288 199h1M311 199h1M318 199h2M328 199h1M334 199h1M357 199h1M361 199h1M443 199h1M486 199h1M517 199h1M535 199h1M538 199h1M548 199h1M550 199h2M553 199h3M559 199h1M565 199h1M570 199h1M578 199h5M586 199h2M599 199h1M606 199h2M615 199h2M626 199h1M221 200h1M246 200h1M287 200h1M291 200h1M314 200h1M327 200h1M334 200h1M361 200h1M443 200h1M522 200h1M548 200h1M552 200h1M556 200h3M564 200h1M572 200h3M578 200h1M580 200h1M583 200h2M590 200h1M596 200h1M604 200h2M608 200h1M616 200h1M626 200h2M222 201h1M233 201h1M272 201h2M275 201h1M283 201h1M291 201h1M294 201h2M298 201h1M318 201h1M336 201h1M361 201h1M443 201h1M518 201h1M528 201h1M546 201h1M550 201h2M553 201h1M556 201h2M559 201h1M567 201h1M569 201h2M573 201h8M582 201h1M586 201h1M592 201h1M610 201h5M222 202h1M298 202h1M344 202h1M361 202h1M444 202h1M552 202h2M557 202h1M566 202h2M570 202h1M573 202h6M584 202h1M589 202h1M596 202h1M599 202h1M601 202h1M603 202h1M610 202h2M613 202h1M615 202h1M617 202h1M627 202h1M129 203h13M145 203h1M223 203h1M236 203h1M265 203h1M267 203h1M279 203h1M314 203h1M324 203h1M355 203h1M359 203h1M361 203h1M445 203h1M549 203h1M552 203h1M554 203h1M559 203h1M565 203h3M570 203h1M572 203h4M578 203h1M580 203h1M583 203h1M591 203h1M593 203h1M599 203h1M601 203h1M603 203h1M606 203h4M612 203h2M616 203h1M618 203h1M627 203h2M128 204h2M139 204h1M142 204h2M222 204h2M269 204h1M272 204h1M285 204h1M309 204h2M361 204h1M490 204h1M520 204h1M536 204h1M552 204h1M558 204h2M562 204h1M567 204h8M576 204h1M582 204h1M591 204h1M603 204h1M606 204h1M608 204h4M615 204h1M628 204h1M126 205h2M130 205h1M144 205h3M160 205h1M162 205h1M224 205h1M277 205h2M283 205h2M309 205h1M312 205h1M359 205h1M361 205h1M443 205h1M446 205h1M555 205h1M562 205h1M567 205h1M569 205h2M573 205h2M581 205h1M595 205h2M598 205h2M601 205h3M606 205h2M609 205h3M615 205h4M628 205h1M125 206h1M146 206h3M156 206h3M160 206h5M224 206h1M226 206h1M294 206h1M301 206h1M309 206h1M361 206h1M519 206h1M540 206h1M558 206h1M563 206h1M565 206h4M571 206h4M586 206h1M592 206h1M594 206h1M599 206h1M601 206h3M606 206h3M610 206h3M614 206h1M616 206h3M628 206h1M124 207h1M148 207h2M154 207h3M164 207h5M265 207h1M300 207h1M306 207h1M356 207h1M358 207h2M361 207h1M447 207h2M544 207h1M562 207h4M567 207h6M574 207h1M579 207h1M590 207h1M599 207h1M601 207h5M607 207h4M612 207h1M614 207h1M617 207h1M619 207h1M628 207h1M124 208h1M147 208h1M149 208h5M168 208h3M224 208h1M280 208h1M356 208h1M358 208h1M360 208h2M448 208h1M559 208h1M564 208h1M566 208h1M568 208h3M578 208h2M586 208h2M592 208h1M594 208h1M597 208h3M601 208h4M607 208h3M611 208h4M616 208h2M621 208h1M628 208h1M123 209h1M171 209h2M225 209h1M331 209h1M358 209h2M361 209h1M449 209h2M477 209h1M516 209h1M545 209h1M560 209h1M562 209h2M566 209h1M568 209h1M571 209h1M576 209h1M578 209h3M591 209h1M593 209h1M597 209h9M607 209h2M611 209h3M617 209h1M620 209h1M122 210h1M173 210h1M225 210h1M326 210h1M356 210h4M361 210h1M450 210h1M530 210h1M550 210h1M554 210h1M558 210h1M560 210h3M564 210h3M568 210h2M572 210h1M575 210h2M591 210h1M593 210h5M600 210h10M628 210h1M121 211h2M174 211h2M225 211h2M260 211h1M290 211h1M295 211h1M302 211h1M311 211h1M316 211h1M331 211h1M354 211h1M356 211h1M358 211h3M450 211h1M553 211h1M558 211h2M563 211h2M566 211h1M574 211h1M584 211h1M587 211h1M589 211h1M592 211h1M594 211h3M598 211h1M600 211h1M602 211h4M607 211h1M609 211h2M617 211h1M628 211h1M630 211h1M120 212h2M175 212h2M226 212h1M291 212h1M346 212h1M355 212h3M360 212h1M451 212h1M513 212h1M526 212h1M560 212h6M567 212h1M579 212h1M587 212h1M590 212h1M594 212h1M597 212h1M599 212h3M603 212h6M618 212h1M120 213h1M227 213h1M316 213h1M360 213h1M452 213h2M539 213h1M546 213h1M559 213h4M581 213h1M583 213h1M585 213h2M588 213h5M594 213h1M596 213h2M599 213h5M605 213h1M607 213h1M615 213h1M629 213h1M119 214h1M227 214h2M321 214h1M333 214h1M345 214h1M354 214h2M358 214h2M453 214h4M528 214h1M545 214h1M551 214h1M559 214h1M561 214h2M583 214h2M587 214h12M605 214h2M609 214h1M611 214h1M620 214h1M628 214h1M119 215h1M178 215h2M228 215h2M237 215h1M334 215h1M344 215h2M356 215h1M358 215h3M456 215h2M544 215h1M546 215h1M558 215h1M581 215h3M585 215h6M592 215h3M598 215h2M603 215h1M610 215h1M616 215h1M628 215h1M118 216h2M122 216h1M179 216h1M229 216h2M294 216h1M321 216h1M353 216h1M356 216h2M458 216h3M526 216h1M560 216h1M562 216h1M568 216h1M576 216h2M581 216h3M587 216h1M589 216h6M596 216h1M599 216h3M604 216h1M628 216h1M117 217h3M180 217h1M230 217h2M271 217h1M300 217h1M322 217h1M330 217h1M356 217h3M460 217h3M541 217h1M559 217h2M574 217h1M578 217h1M580 217h2M584 217h3M588 217h5M594 217h1M596 217h2M600 217h1M606 217h2M609 217h1M612 217h1M628 217h1M118 218h1M179 218h3M231 218h1M354 218h3M358 218h1M462 218h3M546 218h1M579 218h1M581 218h9M591 218h2M596 218h3M600 218h1M607 218h1M611 218h2M628 218h1M118 219h1M181 219h1M232 219h1M324 219h1M355 219h2M358 219h1M464 219h4M557 219h2M560 219h1M566 219h2M576 219h1M579 219h1M581 219h8M590 219h2M598 219h1M601 219h1M604 219h1M606 219h1M608 219h4M613 219h1M628 219h1M117 220h1M182 220h1M233 220h1M356 220h2M468 220h2M523 220h1M556 220h2M565 220h1M574 220h1M582 220h1M585 220h3M595 220h4M600 220h5M608 220h1M628 220h1M182 221h1M233 221h2M352 221h1M354 221h1M356 221h1M470 221h8M555 221h3M579 221h1M581 221h1M585 221h1M591 221h1M593 221h1M595 221h1M600 221h1M602 221h1M606 221h2M609 221h1M628 221h2M116 222h1M183 222h2M235 222h1M263 222h1M301 222h1M355 222h1M476 222h1M478 222h3M534 222h1M540 222h1M555 222h2M574 222h1M580 222h1M584 222h1M587 222h1M592 222h3M597 222h1M599 222h3M603 222h1M605 222h1M617 222h1M629 222h1M115 223h1M183 223h1M235 223h2M240 223h1M331 223h1M351 223h1M353 223h3M481 223h4M511 223h1M556 223h1M564 223h1M566 223h1M582 223h3M589 223h2M594 223h2M597 223h2M603 223h3M615 223h1M620 223h1M628 223h2M115 224h1M164 224h1M168 224h2M184 224h1M236 224h1M280 224h1M307 224h1M350 224h5M485 224h2M547 224h1M552 224h1M555 224h3M562 224h4M569 224h1M582 224h1M586 224h1M588 224h4M595 224h1M599 224h1M601 224h3M614 224h1M624 224h1M628 224h1M114 225h1M166 225h1M168 225h1M171 225h2M184 225h1M237 225h3M344 225h1M347 225h1M349 225h3M487 225h3M541 225h1M559 225h1M563 225h1M572 225h2M577 225h1M580 225h1M591 225h1M593 225h1M598 225h3M602 225h1M608 225h1M611 225h1M628 225h1M114 226h1M165 226h4M170 226h3M174 226h1M185 226h1M238 226h1M262 226h1M348 226h1M351 226h2M490 226h3M554 226h2M557 226h3M566 226h2M581 226h1M586 226h1M589 226h1M593 226h1M599 226h3M608 226h1M611 226h1M628 226h1M161 227h1M164 227h1M166 227h8M185 227h1M240 227h2M298 227h1M348 227h1M351 227h1M493 227h2M496 227h1M554 227h2M557 227h1M563 227h1M576 227h1M583 227h2M587 227h2M591 227h2M596 227h3M605 227h1M609 227h2M628 227h1M160 228h2M163 228h6M170 228h1M175 228h1M178 228h1M184 228h3M241 228h2M343 228h1M345 228h3M349 228h2M497 228h2M554 228h2M560 228h1M563 228h2M571 228h1M585 228h1M588 228h1M595 228h3M618 228h1M621 228h1M628 228h1M109 229h3M163 229h2M168 229h1M170 229h1M173 229h2M185 229h2M243 229h1M345 229h2M348 229h1M499 229h3M517 229h1M563 229h1M565 229h1M567 229h1M585 229h1M590 229h1M594 229h1M599 229h1M616 229h1M628 229h1M106 230h3M164 230h1M166 230h4M171 230h3M175 230h1M186 230h2M244 230h1M338 230h1M342 230h2M347 230h1M501 230h3M507 230h1M561 230h4M573 230h1M581 230h1M583 230h1M593 230h2M601 230h1M603 230h1M615 230h1M621 230h1M628 230h1M105 231h1M160 231h1M163 231h1M165 231h3M169 231h4M175 231h1M177 231h1M186 231h2M245 231h1M268 231h1M341 231h1M345 231h2M504 231h3M542 231h1M559 231h1M562 231h1M564 231h1M580 231h1M582 231h2M587 231h1M596 231h1M601 231h2M615 231h1M628 231h1M104 232h1M109 232h1M114 232h1M160 232h1M162 232h1M165 232h3M169 232h6M177 232h1M187 232h1M247 232h2M340 232h2M344 232h1M507 232h2M563 232h1M578 232h2M584 232h1M592 232h1M594 232h1M600 232h2M614 232h1M628 232h1M100 233h2M103 233h1M105 233h1M162 233h1M165 233h3M169 233h2M172 233h4M187 233h1M248 233h3M336 233h5M343 233h2M509 233h4M598 233h1M605 233h1M607 233h1M628 233h1M99 234h1M165 234h1M167 234h1M169 234h3M174 234h1M177 234h1M250 234h3M331 234h2M334 234h3M338 234h2M342 234h2M512 234h2M540 234h1M585 234h3M609 234h1M613 234h1M628 234h1M98 235h1M163 235h1M166 235h2M169 235h1M171 235h2M177 235h1M188 235h1M252 235h3M287 235h1M331 235h1M333 235h4M514 235h2M586 235h1M613 235h1M623 235h1M627 235h2M97 236h1M164 236h1M168 236h1M170 236h1M174 236h1M189 236h2M254 236h3M328 236h1M332 236h1M335 236h1M337 236h2M516 236h3M583 236h2M599 236h1M612 236h1M619 236h1M628 236h1M95 237h1M125 237h1M128 237h1M168 237h1M171 237h2M191 237h1M193 237h2M256 237h3M265 237h1M327 237h2M331 237h1M337 237h1M339 237h1M519 237h2M532 237h1M587 237h1M590 237h1M609 237h3M615 237h1M628 237h1M94 238h2M122 238h1M131 238h1M194 238h3M259 238h1M261 238h1M330 238h1M332 238h1M334 238h1M519 238h1M521 238h1M580 238h1M589 238h2M602 238h1M608 238h2M612 238h1M619 238h1M625 238h1M628 238h1M93 239h1M120 239h2M128 239h1M197 239h1M260 239h4M318 239h1M321 239h1M323 239h1M325 239h2M522 239h3M554 239h1M562 239h1M579 239h1M599 239h1M606 239h1M614 239h1M628 239h1M92 240h2M122 240h4M127 240h1M131 240h1M142 240h1M183 240h1M187 240h1M198 240h1M264 240h2M287 240h1M321 240h2M325 240h1M329 240h1M331 240h2M524 240h1M579 240h1M590 240h1M617 240h2M628 240h1M92 241h1M121 241h2M124 241h1M127 241h4M145 241h2M198 241h2M267 241h3M300 241h1M304 241h1M314 241h1M317 241h3M326 241h3M525 241h2M573 241h1M599 241h1M604 241h1M608 241h1M616 241h2M628 241h1M91 242h1M96 242h1M122 242h2M126 242h1M129 242h2M200 242h2M298 242h1M303 242h2M306 242h1M308 242h1M311 242h1M314 242h1M316 242h1M318 242h2M324 242h3M526 242h1M563 242h1M598 242h1M616 242h1M628 242h1M91 243h1M118 243h2M123 243h1M126 243h5M132 243h1M145 243h2M191 243h1M201 243h2M274 243h6M298 243h1M301 243h1M304 243h4M311 243h1M317 243h4M322 243h2M527 243h2M557 243h1M572 243h1M598 243h1M605 243h1M612 243h1M614 243h1M628 243h1M90 244h1M117 244h1M119 244h1M122 244h1M124 244h1M126 244h2M129 244h5M146 244h2M203 244h1M272 244h1M280 244h4M290 244h2M305 244h1M311 244h2M316 244h2M528 244h2M546 244h1M569 244h1M571 244h1M591 244h1M599 244h1M607 244h1M609 244h1M611 244h1M617 244h1M627 244h2M90 245h1M123 245h2M126 245h2M129 245h1M131 245h2M134 245h1M144 245h1M146 245h1M203 245h2M281 245h1M284 245h6M292 245h4M297 245h3M301 245h7M312 245h4M529 245h1M555 245h1M571 245h1M578 245h5M585 245h1M589 245h1M592 245h1M603 245h1M606 245h1M608 245h2M628 245h1M89 246h1M118 246h1M122 246h1M125 246h5M131 246h2M147 246h1M149 246h1M204 246h1M291 246h1M317 246h1M530 246h1M572 246h1M578 246h1M581 246h3M586 246h3M592 246h2M595 246h3M603 246h2M606 246h1M608 246h1M610 246h1M620 246h1M628 246h1M89 247h1M120 247h1M122 247h1M124 247h1M126 247h1M128 247h1M130 247h3M134 247h2M137 247h1M531 247h3M591 247h1M594 247h1M596 247h2M599 247h13M614 247h1M618 247h1M620 247h1M628 247h1M88 248h1M123 248h5M131 248h1M133 248h1M188 248h1M533 248h1M589 248h1M598 248h1M601 248h3M607 248h3M611 248h1M618 248h1M628 248h1M88 249h1M120 249h1M123 249h1M125 249h1M127 249h1M132 249h3M534 249h2M537 249h1M609 249h2M628 249h1M88 250h1M120 250h1M126 250h1M129 250h3M153 250h3M207 250h1M535 250h2M543 250h1M597 250h1M613 250h1M628 250h1M88 251h1M125 251h2M129 251h1M132 251h1M134 251h1M144 251h3M148 251h2M207 251h1M536 251h2M595 251h1M609 251h1M613 251h1M628 251h1M87 252h2M125 252h2M129 252h3M207 252h1M209 252h1M537 252h2M571 252h1M590 252h1M608 252h1M613 252h1M627 252h1M87 253h2M129 253h1M208 253h1M539 253h1M557 253h1M573 253h1M576 253h1M579 253h5M586 253h1M591 253h1M604 253h1M627 253h1M87 254h1M129 254h1M208 254h2M578 254h1M585 254h2M588 254h1M592 254h1M594 254h1M605 254h1M612 254h1M627 254h1M87 255h1M116 255h1M208 255h2M542 255h1M568 255h1M591 255h1M627 255h1M87 256h1M209 256h1M541 256h3M596 256h1M599 256h1M611 256h1M626 256h1M86 257h1M116 257h1M120 257h1M176 257h1M179 257h1M209 257h2M543 257h1M562 257h1M626 257h1M86 258h1M116 258h5M210 258h1M541 258h1M544 258h1M595 258h1M605 258h3M626 258h1M86 259h1M106 259h1M120 259h1M123 259h1M126 259h1M172 259h3M179 259h1M210 259h2M545 259h1M615 259h1M619 259h1M625 259h1M85 260h2M96 260h1M100 260h4M105 260h1M116 260h7M124 260h1M172 260h1M174 260h1M176 260h2M180 260h1M182 260h1M186 260h1M190 260h2M211 260h1M546 260h1M582 260h1M600 260h1M625 260h1M85 261h1M101 261h2M104 261h2M116 261h8M172 261h3M176 261h3M186 261h1M188 261h3M192 261h1M194 261h2M547 261h2M612 261h1M625 261h1M84 262h1M97 262h5M103 262h1M105 262h1M112 262h2M115 262h3M119 262h1M122 262h1M172 262h8M185 262h1M187 262h1M190 262h6M211 262h1M548 262h2M577 262h1M613 262h1M624 262h1M84 263h1M101 263h5M107 263h2M115 263h3M119 263h3M123 263h1M172 263h1M175 263h2M178 263h1M187 263h3M191 263h1M196 263h1M211 263h1M549 263h2M577 263h1M579 263h1M592 263h1M606 263h1M619 263h1M624 263h1M84 264h1M97 264h2M100 264h3M104 264h3M109 264h1M113 264h4M118 264h2M122 264h3M126 264h1M171 264h2M174 264h4M179 264h2M185 264h1M187 264h1M189 264h6M209 264h1M212 264h1M550 264h2M575 264h1M577 264h1M579 264h1M591 264h1M617 264h1M619 264h1M624 264h1M83 265h1M99 265h3M103 265h3M113 265h1M116 265h2M119 265h5M171 265h2M174 265h2M177 265h2M181 265h1M186 265h1M190 265h1M212 265h1M551 265h1M576 265h2M580 265h2M618 265h1M623 265h1M83 266h1M97 266h1M100 266h1M102 266h1M105 266h1M112 266h1M114 266h1M116 266h7M172 266h2M175 266h6M186 266h1M189 266h2M193 266h1M210 266h1M212 266h1M464 266h11M552 266h1M576 266h1M578 266h1M614 266h1M623 266h1M82 267h2M98 267h3M115 267h1M117 267h2M120 267h2M172 267h3M176 267h2M179 267h1M210 267h1M212 267h2M464 267h1M475 267h4M553 267h1M577 267h2M580 267h2M606 267h1M611 267h1M82 268h1M102 268h1M105 268h1M108 268h1M116 268h2M121 268h1M165 268h1M172 268h1M174 268h1M176 268h2M212 268h1M463 268h1M479 268h2M554 268h1M580 268h2M592 268h1M606 268h4M622 268h1M82 269h1M100 269h1M102 269h1M118 269h1M121 269h1M173 269h2M176 269h1M212 269h1M462 269h1M480 269h2M554 269h1M579 269h2M582 269h2M589 269h1M603 269h1M605 269h1M622 269h1M81 270h1M122 270h1M210 270h1M212 270h1M461 270h1M482 270h1M555 270h1M581 270h2M613 270h1M621 270h1M81 271h1M119 271h1M124 271h1M199 271h2M212 271h2M460 271h2M483 271h2M555 271h2M579 271h4M603 271h1M621 271h1M81 272h3M120 272h1M124 272h1M176 272h1M182 272h2M185 272h1M194 272h1M196 272h3M213 272h3M459 272h2M484 272h1M556 272h1M578 272h2M581 272h1M583 272h1M593 272h1M595 272h1M597 272h1M609 272h1M614 272h1M620 272h1M80 273h1M120 273h3M183 273h4M194 273h3M216 273h2M459 273h1M484 273h2M557 273h1M579 273h1M581 273h4M594 273h1M619 273h1M80 274h1M119 274h2M122 274h1M143 274h1M185 274h1M188 274h1M190 274h3M195 274h1M218 274h2M459 274h1M485 274h1M557 274h2M580 274h2M583 274h3M612 274h2M619 274h1M80 275h1M120 275h2M142 275h1M146 275h1M161 275h1M191 275h2M194 275h1M219 275h2M458 275h1M486 275h1M559 275h1M583 275h4M618 275h1M80 276h1M127 276h1M141 276h1M143 276h2M146 276h1M165 276h1M220 276h1M457 276h2M487 276h1M559 276h1M572 276h1M582 276h1M585 276h2M606 276h1M617 276h2M80 277h1M130 277h1M139 277h1M141 277h1M143 277h4M148 277h2M165 277h1M221 277h1M457 277h1M487 277h2M560 277h1M584 277h2M587 277h2M601 277h1M608 277h1M617 277h1M79 278h2M119 278h1M141 278h1M143 278h3M148 278h1M150 278h1M161 278h1M165 278h3M221 278h2M455 278h2M488 278h1M561 278h1M586 278h2M594 278h1M616 278h2M119 279h1M142 279h2M145 279h5M161 279h1M163 279h3M168 279h2M222 279h2M455 279h1M489 279h1M561 279h1M585 279h4M594 279h1M616 279h1M79 280h1M138 280h1M143 280h9M159 280h2M162 280h2M165 280h6M223 280h2M447 280h2M450 280h5M489 280h1M562 280h1M585 280h3M589 280h1M607 280h1M616 280h1M78 281h1M143 281h1M145 281h1M147 281h3M151 281h1M160 281h3M164 281h6M225 281h1M441 281h6M474 281h1M490 281h1M562 281h1M603 281h1M615 281h1M78 282h1M131 282h1M144 282h2M147 282h1M149 282h1M159 282h3M164 282h1M167 282h2M226 282h1M434 282h7M491 282h1M563 282h1M596 282h1M600 282h2M614 282h2M78 283h1M146 283h3M160 283h3M165 283h2M226 283h1M429 283h1M431 283h3M491 283h1M564 283h1M598 283h1M600 283h1M612 283h2M78 284h1M144 284h3M148 284h2M161 284h2M165 284h1M227 284h1M229 284h1M428 284h3M491 284h1M565 284h1M612 284h2M78 285h1M144 285h1M162 285h2M167 285h1M228 285h1M425 285h4M492 285h1M566 285h1M586 285h2M601 285h1M612 285h1M78 286h1M157 286h1M228 286h1M424 286h2M492 286h1M566 286h2M595 286h1M597 286h2M601 286h1M610 286h2M78 287h1M229 287h1M423 287h1M493 287h1M567 287h2M588 287h1M592 287h1M595 287h2M609 287h2M78 288h1M153 288h1M230 288h1M421 288h3M493 288h1M568 288h1M608 288h1M79 289h1M230 289h1M420 289h1M494 289h1M567 289h1M569 289h1M596 289h1M598 289h1M606 289h1M79 290h1M137 290h1M217 290h1M419 290h2M473 290h1M494 290h1M569 290h2M590 290h2M594 290h1M605 290h2M79 291h1M81 291h1M166 291h1M208 291h2M218 291h1M231 291h1M419 291h1M473 291h1M494 291h1M570 291h1M595 291h1M604 291h1M80 292h1M126 292h1M139 292h1M165 292h1M209 292h1M218 292h1M231 292h2M418 292h1M494 292h2M571 292h1M603 292h2M80 293h1M126 293h2M140 293h1M163 293h1M165 293h1M208 293h1M218 293h2M232 293h1M416 293h1M418 293h1M495 293h1M498 293h13M572 293h1M601 293h2M80 294h3M123 294h5M140 294h2M152 294h1M163 294h3M209 294h1M230 294h1M233 294h1M417 294h1M453 294h2M495 294h3M511 294h1M573 294h2M600 294h1M82 295h1M122 295h1M124 295h1M126 295h1M139 295h1M160 295h1M163 295h2M210 295h1M219 295h1M233 295h1M416 295h1M452 295h3M456 295h1M512 295h1M574 295h3M599 295h1M82 296h1M123 296h7M141 296h1M159 296h6M233 296h1M416 296h1M433 296h1M454 296h2M512 296h2M576 296h2M83 297h1M124 297h2M141 297h1M155 297h8M201 297h1M233 297h1M415 297h1M433 297h1M513 297h2M578 297h2M591 297h2M123 298h2M128 298h1M142 298h1M150 298h1M153 298h1M156 298h6M210 298h2M234 298h1M415 298h1M514 298h2M580 298h4M585 298h7M151 299h2M155 299h1M157 299h2M211 299h1M232 299h1M234 299h1M414 299h1M515 299h2M584 299h1M85 300h1M151 300h2M154 300h1M174 300h1M212 300h1M234 300h1M414 300h1M516 300h2M85 301h1M148 301h1M150 301h2M174 301h3M178 301h2M220 301h1M234 301h1M414 301h1M517 301h1M85 302h1M147 302h3M174 302h6M212 302h1M233 302h1M413 302h1M457 302h1M517 302h2M86 303h1M148 303h1M175 303h5M181 303h1M196 303h1M212 303h1M233 303h1M413 303h1M446 303h2M518 303h1M87 304h1M147 304h1M174 304h6M183 304h1M230 304h1M412 304h2M445 304h4M519 304h1M87 305h2M146 305h2M149 305h1M174 305h3M178 305h1M233 305h2M412 305h1M444 305h1M446 305h1M468 305h1M519 305h2M89 306h1M147 306h1M179 306h1M192 306h1M196 306h1M198 306h1M233 306h1M411 306h1M445 306h1M520 306h1M90 307h1M146 307h1M233 307h1M411 307h1M427 307h1M443 307h2M521 307h1M91 308h1M146 308h1M234 308h1M410 308h2M427 308h2M443 308h1M521 308h2M91 309h2M94 309h1M145 309h1M234 309h3M409 309h2M443 309h1M458 309h1M516 309h1M522 309h1M92 310h2M145 310h1M236 310h3M408 310h2M515 310h1M523 310h1M93 311h2M146 311h1M222 311h1M239 311h2M407 311h2M451 311h2M523 311h1M95 312h2M210 312h1M241 312h1M407 312h1M430 312h1M451 312h1M462 312h1M523 312h1M96 313h2M241 313h3M405 313h2M524 313h1M97 314h1M217 314h1M243 314h1M404 314h1M525 314h1M98 315h3M172 315h1M175 315h1M178 315h1M207 315h1M209 315h1M244 315h1M403 315h1M438 315h1M507 315h3M525 315h1M100 316h2M174 316h1M176 316h3M206 316h2M245 316h1M402 316h2M477 316h1M515 316h1M525 316h1M101 317h2M175 317h2M205 317h2M246 317h2M401 317h2M454 317h1M463 317h1M524 317h2M100 318h1M103 318h1M174 318h4M200 318h1M203 318h3M246 318h2M400 318h1M436 318h1M456 318h1M472 318h1M525 318h1M103 319h2M174 319h2M177 319h1M200 319h5M247 319h1M399 319h2M446 319h1M525 319h2M104 320h1M142 320h1M148 320h1M162 320h5M176 320h4M184 320h1M197 320h1M201 320h1M223 320h1M246 320h1M248 320h1M398 320h3M524 320h4M104 321h1M140 321h1M150 321h1M161 321h1M163 321h3M175 321h3M179 321h1M183 321h1M248 321h2M397 321h1M427 321h1M446 321h1M460 321h1M475 321h1M526 321h2M105 322h1M141 322h2M163 322h2M166 322h1M175 322h1M177 322h1M183 322h2M224 322h1M228 322h1M249 322h1M396 322h1M444 322h1M496 322h1M528 322h1M105 323h1M144 323h2M166 323h1M220 323h2M223 323h4M249 323h1M395 323h2M449 323h1M471 323h1M525 323h1M528 323h1M106 324h1M140 324h1M143 324h1M184 324h1M220 324h4M227 324h1M249 324h2M394 324h2M422 324h1M451 324h1M456 324h1M528 324h1M106 325h1M151 325h1M154 325h1M184 325h1M218 325h1M221 325h2M224 325h1M226 325h1M229 325h1M250 325h1M393 325h2M491 325h1M526 325h1M528 325h2M106 326h1M136 326h1M185 326h1M222 326h4M227 326h2M250 326h2M392 326h2M399 326h1M405 326h1M420 326h1M422 326h1M486 326h1M496 326h1M525 326h1M529 326h1M107 327h1M185 327h1M220 327h2M224 327h4M251 327h1M392 327h1M402 327h1M417 327h1M420 327h3M489 327h1M529 327h1M108 328h2M119 328h1M134 328h1M185 328h1M222 328h2M225 328h1M227 328h1M251 328h1M391 328h2M420 328h1M423 328h1M429 328h1M491 328h1M494 328h2M529 328h1M135 329h1M140 329h1M220 329h2M223 329h4M244 329h1M252 329h1M390 329h1M419 329h1M436 329h1M528 329h1M530 329h1M110 330h1M142 330h1M171 330h1M185 330h2M222 330h2M252 330h1M389 330h1M418 330h1M437 330h2M473 330h1M475 330h1M483 330h1M527 330h2M530 330h1M111 331h1M144 331h1M222 331h1M226 331h1M240 331h1M252 331h2M389 331h1M432 331h2M435 331h3M467 331h1M469 331h2M474 331h4M529 331h2M112 332h1M115 332h1M129 332h1M186 332h1M195 332h1M252 332h1M388 332h1M427 332h1M433 332h1M457 332h1M463 332h1M472 332h2M475 332h2M479 332h2M496 332h1M530 332h1M112 333h2M144 333h2M220 333h2M252 333h2M387 333h1M432 333h2M448 333h1M462 333h2M470 333h3M474 333h1M476 333h3M480 333h1M482 333h1M496 333h1M114 334h1M143 334h1M253 334h1M386 334h1M404 334h1M430 334h1M449 334h1M455 334h1M474 334h4M479 334h1M530 334h1M115 335h2M211 335h1M253 335h1M386 335h1M442 335h1M448 335h1M450 335h3M454 335h2M472 335h1M474 335h4M479 335h1M494 335h1M531 335h1M116 336h2M253 336h1M385 336h1M447 336h1M451 336h3M464 336h1M471 336h1M475 336h1M477 336h1M481 336h1M496 336h1M523 336h1M531 336h1M115 337h1M117 337h2M142 337h1M147 337h1M151 337h1M221 337h1M253 337h1M384 337h1M426 337h1M438 337h1M475 337h1M487 337h1M491 337h1M504 337h1M530 337h2M118 338h3M208 338h1M221 338h1M247 338h1M253 338h1M383 338h1M453 338h1M456 338h1M488 338h1M531 338h1M119 339h5M198 339h1M208 339h1M252 339h1M383 339h1M462 339h1M487 339h1M506 339h1M527 339h1M531 339h1M122 340h3M198 340h2M203 340h1M206 340h1M208 340h1M212 340h1M232 340h1M247 340h1M252 340h1M383 340h1M448 340h1M459 340h1M484 340h1M531 340h1M124 341h3M170 341h1M179 341h1M198 341h2M222 341h1M246 341h1M252 341h1M382 341h1M484 341h2M487 341h1M531 341h1M126 342h3M146 342h1M169 342h2M197 342h3M223 342h1M252 342h1M382 342h1M395 342h1M448 342h1M459 342h1M484 342h1M486 342h3M531 342h1M128 343h2M166 343h2M169 343h1M176 343h1M224 343h1M233 343h1M247 343h1M252 343h1M381 343h1M455 343h1M485 343h1M487 343h1M531 343h1M130 344h1M163 344h1M167 344h3M223 344h1M231 344h1M253 344h1M381 344h1M408 344h1M531 344h1M131 345h2M246 345h2M253 345h1M360 345h1M380 345h1M423 345h1M431 345h1M443 345h1M445 345h1M511 345h2M531 345h1M132 346h2M252 346h1M379 346h2M443 346h4M493 346h1M500 346h1M531 346h1M134 347h2M225 347h1M245 347h3M249 347h1M252 347h1M379 347h1M420 347h2M443 347h3M470 347h1M502 347h1M532 347h1M135 348h1M246 348h1M252 348h1M378 348h1M413 348h1M418 348h3M445 348h2M479 348h1M513 348h1M522 348h1M532 348h1M134 349h1M136 349h2M160 349h1M244 349h2M252 349h1M378 349h1M415 349h3M431 349h1M464 349h1M466 349h1M487 349h1M532 349h1M138 350h2M225 350h1M252 350h1M378 350h1M402 350h1M465 350h2M479 350h1M488 350h1M501 350h1M513 350h1M533 350h1M140 351h1M225 351h3M244 351h2M252 351h1M377 351h2M394 351h1M437 351h2M469 351h1M533 351h1M140 352h1M142 352h1M245 352h1M466 352h1M468 352h2M533 352h1M142 353h2M225 353h1M252 353h2M376 353h2M465 353h1M467 353h1M473 353h1M481 353h1M491 353h1M499 353h1M504 353h1M533 353h2M143 354h2M252 354h1M376 354h1M467 354h1M514 354h1M534 354h1M143 355h1M145 355h2M246 355h1M252 355h1M440 355h1M453 355h1M459 355h2M499 355h2M534 355h1M147 356h1M154 356h1M202 356h1M229 356h2M237 356h1M239 356h1M251 356h2M375 356h2M435 356h1M458 356h1M534 356h1M148 357h2M229 357h4M237 357h2M249 357h1M251 357h1M374 357h2M434 357h1M458 357h1M528 357h1M531 357h1M535 357h1M150 358h2M229 358h3M238 358h1M251 358h1M374 358h1M467 358h1M535 358h1M151 359h2M237 359h1M250 359h1M374 359h1M461 359h1M529 359h2M535 359h1M153 360h2M157 360h1M247 360h1M250 360h1M373 360h1M472 360h1M500 360h1M529 360h1M535 360h1M155 361h3M250 361h1M373 361h2M535 361h1M157 362h4M250 362h1M373 362h1M478 362h1M485 362h3M501 362h1M535 362h1M161 363h4M250 363h1M373 363h1M419 363h1M426 363h1M434 363h1M462 363h1M476 363h1M479 363h1M484 363h1M486 363h1M495 363h1M535 363h2M164 364h3M250 364h1M416 364h4M457 364h1M478 364h1M481 364h1M486 364h1M496 364h1M530 364h2M536 364h1M166 365h3M187 365h1M198 365h1M250 365h1M372 365h1M414 365h1M416 365h2M450 365h1M474 365h1M494 365h1M529 365h1M536 365h1M169 366h2M249 366h1M372 366h1M438 366h1M473 366h1M536 366h1M171 367h2M249 367h1M372 367h1M474 367h1M479 367h1M521 367h1M536 367h1M172 368h2M194 368h2M248 368h2M449 368h1M531 368h1M536 368h1M174 369h1M194 369h4M248 369h1M372 369h1M413 369h2M441 369h1M469 369h1M530 369h1M536 369h1M175 370h4M186 370h1M196 370h1M248 370h1M371 370h1M373 370h1M536 370h1M178 371h3M247 371h1M371 371h1M395 371h1M422 371h1M443 371h1M449 371h1M454 371h1M463 371h1M481 371h1M536 371h1M181 372h1M246 372h1M372 372h1M395 372h1M449 372h1M489 372h1M536 372h1M246 373h1M372 373h1M462 373h2M467 373h1M536 373h1M245 374h1M372 374h1M394 374h1M439 374h1M452 374h1M464 374h1M536 374h1M185 375h1M187 375h2M244 375h2M371 375h2M440 375h1M462 375h1M499 375h1M535 375h1M188 376h3M243 376h2M371 376h1M451 376h1M477 376h1M532 376h1M534 376h2M190 377h3M241 377h2M371 377h1M430 377h1M444 377h1M463 377h1M533 377h3M193 378h5M240 378h3M371 378h1M418 378h1M464 378h1M511 378h1M513 378h1M535 378h1M197 379h4M238 379h2M371 379h1M408 379h1M410 379h5M417 379h1M422 379h1M424 379h1M534 379h1M201 380h3M236 380h3M240 380h1M371 380h2M409 380h1M411 380h2M534 380h1M202 381h7M215 381h1M233 381h3M371 381h1M533 381h2M209 382h6M216 382h8M229 382h3M234 382h1M371 382h1M445 382h1M533 382h1M215 383h1M218 383h1M226 383h1M371 383h1M459 383h1M531 383h2M371 384h1M430 384h1M531 384h1M371 385h2M530 385h1M372 386h1M529 386h2M372 387h1M484 387h1M528 387h2M372 388h1M451 388h1M527 388h1M372 389h1M408 389h2M436 389h1M525 389h2M372 390h1M408 390h2M524 390h2M372 391h1M408 391h1M410 391h1M511 391h1M524 391h1M372 392h1M487 392h1M508 392h1M522 392h2M372 393h1M519 393h3M372 394h1M518 394h2M373 395h1M439 395h1M516 395h2M373 396h1M514 396h3M373 397h2M513 397h2M374 398h1M511 398h2M374 399h1M491 399h1M509 399h2M530 399h1M375 400h1M508 400h1M375 401h1M506 401h2M375 402h1M419 402h1M504 402h2M375 403h1M377 403h1M503 403h2M376 404h1M378 404h1M431 404h1M502 404h2M376 405h1M500 405h2M376 406h2M474 406h1M500 406h1M377 407h1M497 407h3M376 408h3M495 408h2M378 409h3M494 409h1M379 410h2M493 410h2M380 411h2M490 411h3M381 412h1M490 412h1M382 413h1M489 413h1M382 414h2M487 414h2M383 415h2M410 415h1M486 415h2M484 416h2M386 417h1M482 417h3M385 418h3M475 418h2M479 418h4M387 419h2M419 419h1M475 419h1M477 419h3M388 420h2M476 420h1M390 421h2M471 421h1M475 421h1M392 422h2M399 422h1M417 422h1M471 422h4M393 423h2M467 423h1M469 423h4M394 424h4M463 424h1M467 424h3M398 425h2M465 425h2M400 426h1M403 426h1M462 426h3M402 427h2M459 427h4M403 428h3M411 428h1M457 428h3M406 429h5M454 429h3M410 430h2M413 430h1M432 430h1M449 430h5M420 431h4M439 431h10M424 432h9M434 432h4M425 433h1M443 433h1M444 434h1" stroke="#fff" stroke-width="1" fill="none" transform="translate(0,0.5)"/>
</svg></div>
</div></body></html>
